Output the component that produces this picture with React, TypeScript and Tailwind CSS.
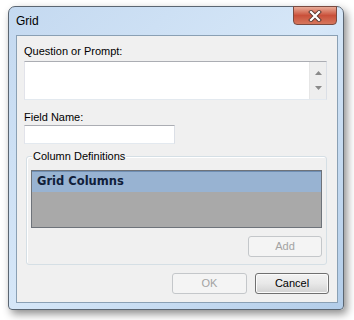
import React from "react";

const font = { fontFamily: '"Liberation Sans", Arial, sans-serif' };

function Btn({ label, disabled, w }: { label: string; disabled?: boolean; w: string }) {
  return (
    <div
      className={
        "h-[21px] rounded-[3px] border flex items-center justify-center text-[11px] " +
        w +
        " " +
        (disabled
          ? "border-[#c4c7ca] bg-[#f4f4f4] text-[#a3a3a3]"
          : "border-[#707070] bg-gradient-to-b from-[#f3f3f3] via-[#e8e8e8] to-[#d2d2d2] text-black shadow-[inset_0_0_0_1px_#fbfbfb]")
      }
    >
      {label}
    </div>
  );
}

export default function App() {
  return (
    <div className="w-[354px] h-[320px] bg-white pt-[6px] pl-[8px]" style={font}>
      <div className="relative w-[336px] h-[304px] rounded-t-[7px] rounded-b-[4px] border border-[#5b6672] bg-gradient-to-br from-[#c4d9f0] via-[#d6e7f8] to-[#b3cde9] shadow-[3px_4px_8px_rgba(0,0,0,0.45)] flex flex-col">
        <div className="h-[28px] flex items-center pl-[7px] text-[12px] text-black">Grid</div>

        {/* close button */}
        <div className="absolute right-[6px] top-[-1px] w-[44px] h-[19px] rounded-b-[4px] border border-[#7a4a40] bg-gradient-to-b from-[#e8ab98] via-[#c9503a] to-[#d6765c] flex items-center justify-center">
          <svg width="14" height="12" viewBox="0 0 14 12">
            <path d="M3 2 L11 10 M11 2 L3 10" stroke="#5a3a33" strokeWidth="4" strokeLinecap="square" />
            <path d="M3 2 L11 10 M11 2 L3 10" stroke="#ffffff" strokeWidth="2.2" strokeLinecap="square" />
          </svg>
        </div>

        <div className="ml-[7px] w-[322px] h-[268px] border border-[#8aa0b4] bg-[#f0f0f0] pl-[7px] pt-[8px] text-[11px] text-black">
          <div className="leading-[15px]">Question or Prompt:</div>
          <div className="mt-[2px] w-[303px] h-[39px] bg-white border border-[#abadb3] border-l-[#e2e3ea] border-r-[#dbdfe6] border-b-[#e3e9ef] flex justify-end">
            <div className="w-[17px] h-full bg-[#eeeeee] border-l border-[#e6e6e6] flex flex-col items-center justify-between py-[9px]">
              <svg width="7" height="4" viewBox="0 0 7 4"><path d="M0 4 L3.5 0 L7 4 Z" fill="#8a8a8a" /></svg>
              <svg width="7" height="4" viewBox="0 0 7 4"><path d="M0 0 L3.5 4 L7 0 Z" fill="#8a8a8a" /></svg>
            </div>
          </div>

          <div className="mt-[10px] leading-[15px]">Field Name:</div>
          <div className="w-[151px] h-[19px] bg-white border border-[#abadb3] border-l-[#e2e3ea] border-r-[#dbdfe6] border-b-[#e3e9ef]" />

          <div className="relative mt-[12px] ml-[2px] w-[301px] h-[109px] border border-[#d5dfe5] rounded-[3px] shadow-[inset_1px_1px_0_#ffffff]">
            <div className="absolute left-[5px] top-[-8px] px-[1px] bg-[#f0f0f0] leading-[15px]">Column Definitions</div>
            <div className="ml-[4px] mt-[13px] w-[291px] h-[58px] border border-[#6e737a] bg-[#a9a9a9]">
              <div className="h-[21px] bg-[#98b3d2] border-t border-[#6f8eb3] pl-[5px] flex items-center font-bold text-[#10203a]" style={{ fontFamily: '"DejaVu Sans", Verdana, sans-serif', fontSize: "11.5px" }}>
                Grid Columns
              </div>
            </div>
            <div className="mt-[8px] ml-[221px]">
              <Btn label="Add" disabled w="w-[74px]" />
            </div>
          </div>

          <div className="mt-[8px] flex gap-[8px] pl-[148px]">
            <Btn label="OK" disabled w="w-[75px]" />
            <Btn label="Cancel" w="w-[74px]" />
          </div>
        </div>
      </div>
    </div>
  );
}
